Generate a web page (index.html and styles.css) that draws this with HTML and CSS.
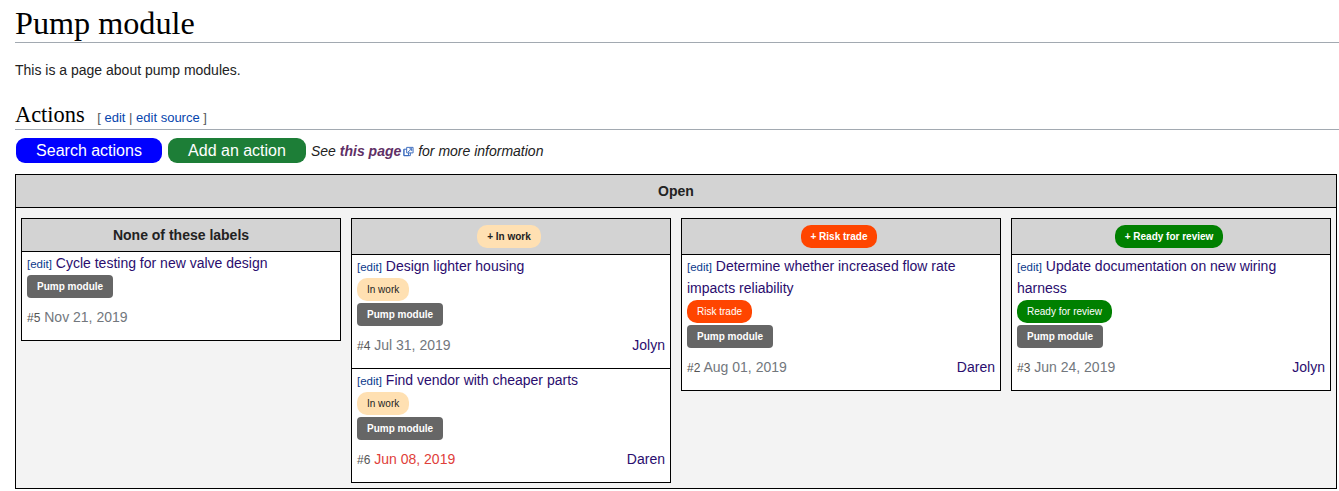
FILE: index.html
```html
<!DOCTYPE html>
<html lang="en">
<head>
<meta charset="utf-8">
<title>Pump module</title>
<link rel="stylesheet" href="styles.css">
</head>
<body>
<h1 class="title">Pump module</h1>
<p class="intro">This is a page about pump modules.</p>
<h2 class="section">Actions <span class="sec-edit">[ <a href="#">edit</a> | <a href="#">edit source</a> ]</span></h2>
<div class="actions">
  <a class="btn btn-blue" href="#">Search actions</a>
  <a class="btn btn-green" href="#">Add an action</a>
  <span class="see">See <a class="visited" href="#">this page</a><svg class="ext" viewBox="0 0 12 12" width="11" height="11" aria-hidden="true"><path d="M1 3.500h5v7H1zM1 3.500v7h7V7" fill="none" stroke="#36b" stroke-width="1"/><path d="M4 1.500h7v6H4z" fill="#fff" stroke="#36b" stroke-width="1"/><path d="M9.500 3L5.500 6.500M7 3h2.500v2.500" fill="none" stroke="#36b" stroke-width="1"/></svg> for more information</span>
</div>
<section class="board">
  <header class="board-head">Open</header>
  <div class="columns">
    <div class="column">
      <div class="col-head col-head-plain">None of these labels</div>
      <article class="card">
        <div class="card-title"><a class="edit" href="#">[edit]</a> <a class="link" href="#">Cycle testing for new valve design</a></div>
        <div class="tags"><span class="tag tag-module">Pump module</span></div>
        <div class="meta"><span class="date"><small>#5</small> Nov 21, 2019</span></div>
      </article>
    </div>
    <div class="column">
      <div class="col-head"><span class="pill-head pill-work">+ In work</span></div>
      <article class="card">
        <div class="card-title"><a class="edit" href="#">[edit]</a> <a class="link" href="#">Design lighter housing</a></div>
        <div class="tags"><span class="tag pill-work">In work</span><span class="tag tag-module">Pump module</span></div>
        <div class="meta"><span class="date"><small>#4</small> Jul 31, 2019</span><a class="link" href="#">Jolyn</a></div>
      </article>
      <article class="card">
        <div class="card-title"><a class="edit" href="#">[edit]</a> <a class="link" href="#">Find vendor with cheaper parts</a></div>
        <div class="tags"><span class="tag pill-work">In work</span><span class="tag tag-module">Pump module</span></div>
        <div class="meta"><span class="date"><small>#6</small> <span class="overdue">Jun 08, 2019</span></span><a class="link" href="#">Daren</a></div>
      </article>
    </div>
    <div class="column">
      <div class="col-head"><span class="pill-head pill-risk">+ Risk trade</span></div>
      <article class="card">
        <div class="card-title"><a class="edit" href="#">[edit]</a> <a class="link" href="#">Determine whether increased flow rate impacts reliability</a></div>
        <div class="tags"><span class="tag pill-risk">Risk trade</span><span class="tag tag-module">Pump module</span></div>
        <div class="meta"><span class="date"><small>#2</small> Aug 01, 2019</span><a class="link" href="#">Daren</a></div>
      </article>
    </div>
    <div class="column">
      <div class="col-head"><span class="pill-head pill-ready">+ Ready for review</span></div>
      <article class="card">
        <div class="card-title"><a class="edit" href="#">[edit]</a> <a class="link" href="#">Update documentation on new wiring harness</a></div>
        <div class="tags"><span class="tag pill-ready">Ready for review</span><span class="tag tag-module">Pump module</span></div>
        <div class="meta"><span class="date"><small>#3</small> Jun 24, 2019</span><a class="link" href="#">Jolyn</a></div>
      </article>
    </div>
  </div>
</section>
</body>
</html>
```

FILE: styles.css
```css
html, body { margin: 0; padding: 0; background: #fff; }
body {
  padding: 0 0 0 15px;
  font-family: "Liberation Sans", Arial, sans-serif;
  font-size: 14px;
  color: #222;
  overflow: hidden;
}
a { text-decoration: none; }
.title {
  margin: 0;
  height: 42px;
  border-bottom: 1px solid #a2a9b1;
  font-family: "Liberation Serif", serif;
  font-weight: 400;
  font-size: 32.200px;
  line-height: 46px;
  color: #000;
}
.intro { margin: 0; padding-top: 18px; line-height: 19px; height: 19px; color: #222; }
.section {
  margin: 10px 0 0;
  height: 39px;
  line-height: 50px;
  border-bottom: 1px solid #a2a9b1;
  font-family: "Liberation Serif", serif;
  font-weight: 400;
  font-size: 22.400px;
  color: #000;
}
.sec-edit { font-family: "Liberation Sans", sans-serif; font-size: 13px; color: #54595d; margin-left: 7px; }
.sec-edit a { color: #0645ad; }
.actions { display: flex; align-items: center; height: 25px; margin-top: 8px; padding-left: 1px; }
.btn {
  display: block;
  height: 25px;
  line-height: 25px;
  border-radius: 9px;
  color: #fff;
  font-size: 16px;
  text-align: center;
}
.btn-blue { width: 146px; background: #0000ff; }
.btn-green { width: 138px; margin-left: 6px; background: #1d7e37; }
.see { margin-left: 5px; font-style: italic; color: #222; white-space: nowrap; }
.visited { color: #5f3066; font-weight: 700; }
.ext { vertical-align: -1px; margin-left: 2px; }
.board {
  width: 1322px;
  box-sizing: border-box;
  margin-top: 11px;
  border: 1px solid #000;
  background: #f3f3f3;
}
.board-head {
  height: 32px;
  line-height: 32px;
  background: #d3d3d3;
  border-bottom: 1px solid #000;
  text-align: center;
  font-weight: 700;
  color: #222;
}
.columns {
  display: grid;
  grid-template-columns: repeat(4, 320px);
  gap: 10px;
  box-sizing: border-box;
  height: 280px;
  padding: 10px 5px 5px;
  align-items: start;
}
.column { display: flex; flex-direction: column; }
.col-head {
  height: 37px;
  box-sizing: border-box;
  border: 1px solid #000;
  background: #d3d3d3;
  display: flex;
  align-items: center;
  justify-content: center;
  font-weight: 700;
}
.col-head-plain { height: 34px; }
.pill-head {
  display: block;
  height: 23px;
  line-height: 23px;
  padding: 0 10px;
  margin-right: 4px;
  border-radius: 10px;
  font-size: 10px;
  font-weight: 700;
}
.pill-work { background: #ffe0b2; color: #222; }
.pill-risk { background: #ff4500; color: #fff; }
.pill-ready { background: #008000; color: #fff; }
.card {
  border: 1px solid #000;
  border-top: 0;
  background: #fff;
  padding: 0 5px;
}
.card-title { line-height: 22px; color: #000; font-size: 14px; }
.edit { font-size: 11.500px; line-height: 1; color: #0b3a8c; }
.link { color: #2a0d6e; }
.tags { display: flex; flex-direction: column; align-items: flex-start; gap: 2px; margin-top: 1px; }
.tag {
  display: block;
  height: 23px;
  line-height: 23px;
  padding: 0 10px;
  border-radius: 10px;
  font-size: 10px;
}
.tag-module { background: #666; color: #fff; font-weight: 700; border-radius: 4px; }
.meta {
  display: flex;
  justify-content: space-between;
  height: 42px;
  padding-top: 8px;
  box-sizing: border-box;
  line-height: 22px;
}
.date { color: #72777d; }
.date small { font-size: 12px; line-height: 1; color: #555; }
.overdue { color: #e0403a; }
```
